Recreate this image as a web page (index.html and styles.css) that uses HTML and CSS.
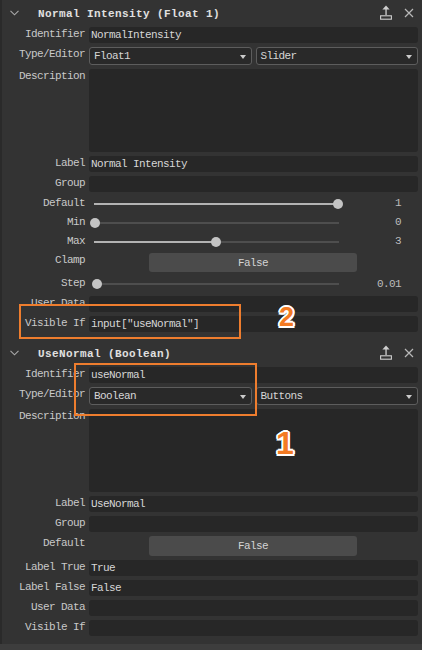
FILE: index.html
```html
<!DOCTYPE html>
<html>
<head>
<meta charset="utf-8">
<link rel="stylesheet" href="styles.css">
</head>
<body>
<div class="panel">
  <section class="prop">
    <div class="prop-head">
      <svg class="chev" width="9" height="6" viewBox="0 0 9 6"><path d="M0.5 0.8 L4.5 4.8 L8.5 0.8" fill="none" stroke="#a9a9a9" stroke-width="1.1"/></svg>
      <span class="title">Normal Intensity (Float 1)</span>
      <svg class="icon-up" width="12" height="15" viewBox="0 0 12 15"><path d="M6 0.5 L9.6 4.4 L2.4 4.4 Z" fill="#cfcfcf"/><rect x="5.4" y="4" width="1.3" height="6" fill="#cfcfcf"/><rect x="0.6" y="10.8" width="10.8" height="3.4" fill="none" stroke="#cfcfcf" stroke-width="1.1"/></svg>
      <svg class="icon-x" width="10" height="10" viewBox="0 0 10 10"><path d="M1 1 L9 9 M9 1 L1 9" stroke="#b8b8b8" stroke-width="1.2"/></svg>
    </div>
    <div class="prop-body">
      <div class="lbl">Identifier</div>
      <div class="field">NormalIntensity</div>

      <div class="lbl">Type/Editor</div>
      <div class="selects">
        <div class="select"><span>Float1</span><span class="caret"></span></div>
        <div class="select"><span>Slider</span><span class="caret"></span></div>
      </div>

      <div class="lbl">Description</div>
      <div class="field area"></div>

      <div class="lbl">Label</div>
      <div class="field">Normal Intensity</div>

      <div class="lbl">Group</div>
      <div class="field"></div>

      <div class="lbl">Default</div>
      <div class="slider">
        <div class="range"><div class="track"><div class="fill" style="width:100%"></div></div><div class="knob" style="left:243px"></div></div>
        <div class="val">1</div>
      </div>

      <div class="lbl">Min</div>
      <div class="slider">
        <div class="range"><div class="track"><div class="fill" style="width:0%"></div></div><div class="knob" style="left:0px"></div></div>
        <div class="val">0</div>
      </div>

      <div class="lbl">Max</div>
      <div class="slider">
        <div class="range"><div class="track"><div class="fill" style="width:49.8%"></div></div><div class="knob" style="left:121px"></div></div>
        <div class="val">3</div>
      </div>

      <div class="lbl">Clamp</div>
      <div class="btn-row"><div class="btn">False</div></div>

      <div class="lbl">Step</div>
      <div class="slider step">
        <div class="range"><div class="track"><div class="fill" style="width:0%"></div></div><div class="knob" style="left:2px"></div></div>
        <div class="val">0.01</div>
      </div>

      <div class="lbl">User Data</div>
      <div class="field"></div>

      <div class="lbl">Visible If</div>
      <div class="field">input["useNormal"]</div>
    </div>
  </section>

  <section class="prop">
    <div class="prop-head">
      <svg class="chev" width="9" height="6" viewBox="0 0 9 6"><path d="M0.5 0.8 L4.5 4.8 L8.5 0.8" fill="none" stroke="#a9a9a9" stroke-width="1.1"/></svg>
      <span class="title">UseNormal (Boolean)</span>
      <svg class="icon-up" width="12" height="15" viewBox="0 0 12 15"><path d="M6 0.5 L9.6 4.4 L2.4 4.4 Z" fill="#cfcfcf"/><rect x="5.4" y="4" width="1.3" height="6" fill="#cfcfcf"/><rect x="0.6" y="10.8" width="10.8" height="3.4" fill="none" stroke="#cfcfcf" stroke-width="1.1"/></svg>
      <svg class="icon-x" width="10" height="10" viewBox="0 0 10 10"><path d="M1 1 L9 9 M9 1 L1 9" stroke="#b8b8b8" stroke-width="1.2"/></svg>
    </div>
    <div class="prop-body">
      <div class="lbl">Identifier</div>
      <div class="field">useNormal</div>

      <div class="lbl">Type/Editor</div>
      <div class="selects">
        <div class="select"><span>Boolean</span><span class="caret"></span></div>
        <div class="select"><span>Buttons</span><span class="caret"></span></div>
      </div>

      <div class="lbl">Description</div>
      <div class="field area"></div>

      <div class="lbl">Label</div>
      <div class="field">UseNormal</div>

      <div class="lbl">Group</div>
      <div class="field"></div>

      <div class="lbl">Default</div>
      <div class="btn-row tall"><div class="btn">False</div></div>

      <div class="lbl">Label True</div>
      <div class="field">True</div>

      <div class="lbl">Label False</div>
      <div class="field">False</div>

      <div class="lbl">User Data</div>
      <div class="field"></div>

      <div class="lbl">Visible If</div>
      <div class="field"></div>
    </div>
  </section>
  <div class="foot"></div>
</div>

<div class="mark mark-2"></div>
<div class="mark mark-1"></div>
<div class="num num-2">2</div>
<div class="num num-1">1</div>
</body>
</html>
```

FILE: styles.css
```css
* {
  box-sizing: border-box;
  margin: 0;
  padding: 0;
}

html, body {
  width: 422px;
  height: 650px;
  overflow: hidden;
  background: #333333;
}

body {
  position: relative;
  font-family: "Liberation Mono", "DejaVu Sans Mono", monospace;
  font-size: 11px;
  letter-spacing: -0.6px;
  color: #d2d2d2;
}

.panel {
  border-left: 2px solid #2a2a2a;
  background: #333333;
  height: 650px;
}

.prop-head {
  height: 24px;
  display: flex;
  align-items: center;
}

.chev {
  margin-left: 8px;
  margin-top: 1px;
  flex: none;
}

.title {
  margin-left: 19px;
  flex: 1;
  font-weight: bold;
  letter-spacing: 0.4px;
  color: #e0e0e0;
  line-height: 14px;
  margin-top: 4px;
}

.icon-up {
  flex: none;
}

.icon-x {
  flex: none;
  margin-left: 12px;
  margin-right: 8px;
  margin-top: 2px;
}

.prop-body {
  display: grid;
  grid-template-columns: 83px 329px;
  column-gap: 4px;
  row-gap: 4px;
  padding: 3px 0 8px 0;
}

.lbl {
  align-self: start;
  text-align: right;
  line-height: 14px;
  color: #c9c9c9;
  white-space: nowrap;
}

.field {
  height: 16px;
  line-height: 16px;
  background: #272727;
  border-radius: 3px;
  padding-left: 2px;
  color: #d6d6d6;
  white-space: nowrap;
}

.field.area {
  height: 83px;
}

.selects {
  display: flex;
  gap: 4px;
  height: 18px;
}

.select {
  flex: 1;
  display: flex;
  align-items: center;
  justify-content: space-between;
  border: 1px solid #5d5d5d;
  border-radius: 3px;
  background: #292929;
  padding: 0 5px 0 4px;
  line-height: 16px;
  color: #d6d6d6;
}

.caret {
  width: 0;
  height: 0;
  border-left: 3px solid transparent;
  border-right: 3px solid transparent;
  border-top: 4px solid #cccccc;
  margin-top: 2px;
}

.slider {
  display: flex;
  align-items: center;
  height: 15px;
}

.slider.step {
  height: 16px;
}

.range {
  position: relative;
  width: 253px;
  height: 100%;
  margin-left: 1px;
  flex: none;
}

.track {
  position: absolute;
  left: 4px;
  right: 4px;
  top: 50%;
  height: 2px;
  margin-top: -1px;
  background: #4e4e4e;
}

.fill {
  height: 100%;
  background: #b3b3b3;
}

.knob {
  position: absolute;
  top: 50%;
  width: 10px;
  height: 10px;
  margin-top: -5px;
  border-radius: 50%;
  background: #c4c4c4;
}

.val {
  flex: 1;
  text-align: right;
  padding-right: 17px;
  color: #bdbdbd;
  line-height: 15px;
}

.btn-row {
  height: 19px;
}

.btn-row.tall {
  height: 20px;
}

.btn {
  width: 208px;
  height: 100%;
  margin-left: 60px;
  background: #4b4b4b;
  border-radius: 3px;
  text-align: center;
  display: flex;
  align-items: center;
  justify-content: center;
  color: #d4d4d4;
}

.foot {
  height: 6px;
  background: #3d3d3d;
  margin-left: -2px;
}

.mark {
  position: absolute;
  border: 2px solid #ee7d2e;
}

.mark-2 {
  left: 19px;
  top: 304px;
  width: 222px;
  height: 35px;
}

.mark-1 {
  left: 74px;
  top: 363px;
  width: 183px;
  height: 53px;
}

.num {
  position: absolute;
  font-family: "Liberation Sans", Arial, sans-serif;
  font-weight: bold;
  color: #f37a23;
  letter-spacing: 0;
  line-height: 1;
  text-shadow:
    2px 0 0 #fff, -2px 0 0 #fff, 0 2px 0 #fff, 0 -2px 0 #fff,
    1.5px 1.5px 0 #fff, -1.5px 1.5px 0 #fff, 1.5px -1.5px 0 #fff, -1.5px -1.5px 0 #fff;
}

.num-2 {
  left: 279px;
  top: 304px;
  font-size: 27px;
}

.num-1 {
  left: 276px;
  top: 427px;
  font-size: 32px;
}
```
